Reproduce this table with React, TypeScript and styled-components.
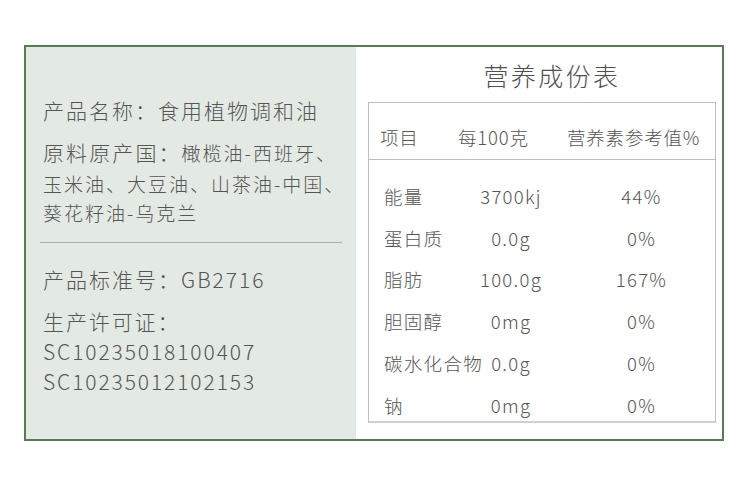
import React from 'react';
import styled, { createGlobalStyle } from 'styled-components';

const GlobalStyle = createGlobalStyle`
  html, body {
    margin: 0;
    padding: 0;
    background: #ffffff;
  }
  body {
    font-family: "Noto Sans CJK SC", "Noto Sans", sans-serif;
    font-weight: 300;
    color: #555555;
  }
`;

type Nutrient = { name: string; amount: string; nrv: string };

const nutrients: Nutrient[] = [
  { name: '能量', amount: '3700kj', nrv: '44%' },
  { name: '蛋白质', amount: '0.0g', nrv: '0%' },
  { name: '脂肪', amount: '100.0g', nrv: '167%' },
  { name: '胆固醇', amount: '0mg', nrv: '0%' },
  { name: '碳水化合物', amount: '0.0g', nrv: '0%' },
  { name: '钠', amount: '0mg', nrv: '0%' },
];

const App: React.FC = () => {
  return (
    <>
      <GlobalStyle />
      <Card>
        <InfoPanel>
          <Field>产品名称：食用植物调和油</Field>
          <Origin>
            <Label>原料原产国：</Label>
            <Value>橄榄油-西班牙、</Value>
            <OriginLine>玉米油、大豆油、山茶油-中国、</OriginLine>
            <OriginLine>葵花籽油-乌克兰</OriginLine>
          </Origin>
          <Divider />
          <Field $gap={21}>产品标准号：GB2716</Field>
          <License>
            生产许可证：
            <br />
            SC10235018100407
            <br />
            SC10235012102153
          </License>
        </InfoPanel>

        <NutritionPanel>
          <Title>营养成份表</Title>
          <Table>
            <HeaderRow>
              <span>项目</span>
              <span>每100克</span>
              <span>营养素参考值%</span>
            </HeaderRow>
            <Body>
              {nutrients.map(({ name, amount, nrv }) => (
                <Row key={name}>
                  <NameCell>{name}</NameCell>
                  <AmountCell>{amount}</AmountCell>
                  <NrvCell>{nrv}</NrvCell>
                </Row>
              ))}
            </Body>
          </Table>
        </NutritionPanel>
      </Card>
    </>
  );
};

export default App;

const Card = styled.div`
  box-sizing: border-box;
  margin: 45px 0 0 24px;
  width: 700px;
  height: 396px;
  border: 2px solid #587a55;
  display: grid;
  grid-template-columns: 330px 1fr;
  box-shadow: 0 4px 6px rgba(0, 0, 0, 0.03);
`;

const InfoPanel = styled.div`
  background: #e3eae4;
  padding: 48px 0 0 17px;
  display: flex;
  flex-direction: column;
`;

const Field = styled.div<{ $gap?: number }>`
  font-size: 21px;
  line-height: 30px;
  letter-spacing: 2px;
  margin-top: ${(p) => p.$gap ?? 0}px;
  white-space: nowrap;
`;

const Origin = styled.div`
  margin-top: 13px;
  line-height: 29px;
  white-space: nowrap;
`;

const Label = styled.span`
  font-size: 21px;
  letter-spacing: 2.1px;
`;

const Value = styled.span`
  font-size: 19px;
  letter-spacing: 2px;
`;

const OriginLine = styled.div`
  font-size: 19px;
  letter-spacing: 2px;
`;

const Divider = styled.hr`
  border: none;
  border-top: 1px solid #ababab;
  margin: 15px 0 0 -3px;
  width: 302px;
  height: 0;
`;

const License = styled.div`
  margin-top: 12px;
  font-size: 21px;
  line-height: 30px;
  letter-spacing: 1.9px;
`;

const NutritionPanel = styled.div`
  background: #ffffff;
  padding: 11px 6px 0 12px;
  display: flex;
  flex-direction: column;
`;

const Title = styled.div`
  font-size: 25px;
  line-height: 34px;
  letter-spacing: 2.4px;
  text-align: center;
  padding-left: 20px;
  color: #505050;
`;

const Table = styled.div`
  box-sizing: border-box;
  margin-top: 10px;
  height: 321px;
  border: 1px solid #bdbdbd;
  border-bottom: 2px solid #cfcfcf;
  display: flex;
  flex-direction: column;
  font-size: 18.5px;
  letter-spacing: 0.8px;
`;

const HeaderRow = styled.div`
  box-sizing: border-box;
  flex-shrink: 0;
  height: 57px;
  padding: 19px 0 0 11px;
  line-height: 30px;
  border-bottom: 1px solid #bdbdbd;
  display: grid;
  grid-template-columns: 78px 109px auto;
  white-space: nowrap;
`;

const Body = styled.div`
  padding: 15px 0 0 15px;
  display: grid;
  grid-auto-rows: 41.8px;
  letter-spacing: 1.3px;
`;

const Row = styled.div`
  display: grid;
  grid-template-columns: 90px 74px 1fr;
  align-items: center;
  white-space: nowrap;
`;

const NameCell = styled.span``;

const AmountCell = styled.span`
  text-align: center;
`;

const NrvCell = styled.span`
  text-align: center;
  padding-left: 20px;
`;
